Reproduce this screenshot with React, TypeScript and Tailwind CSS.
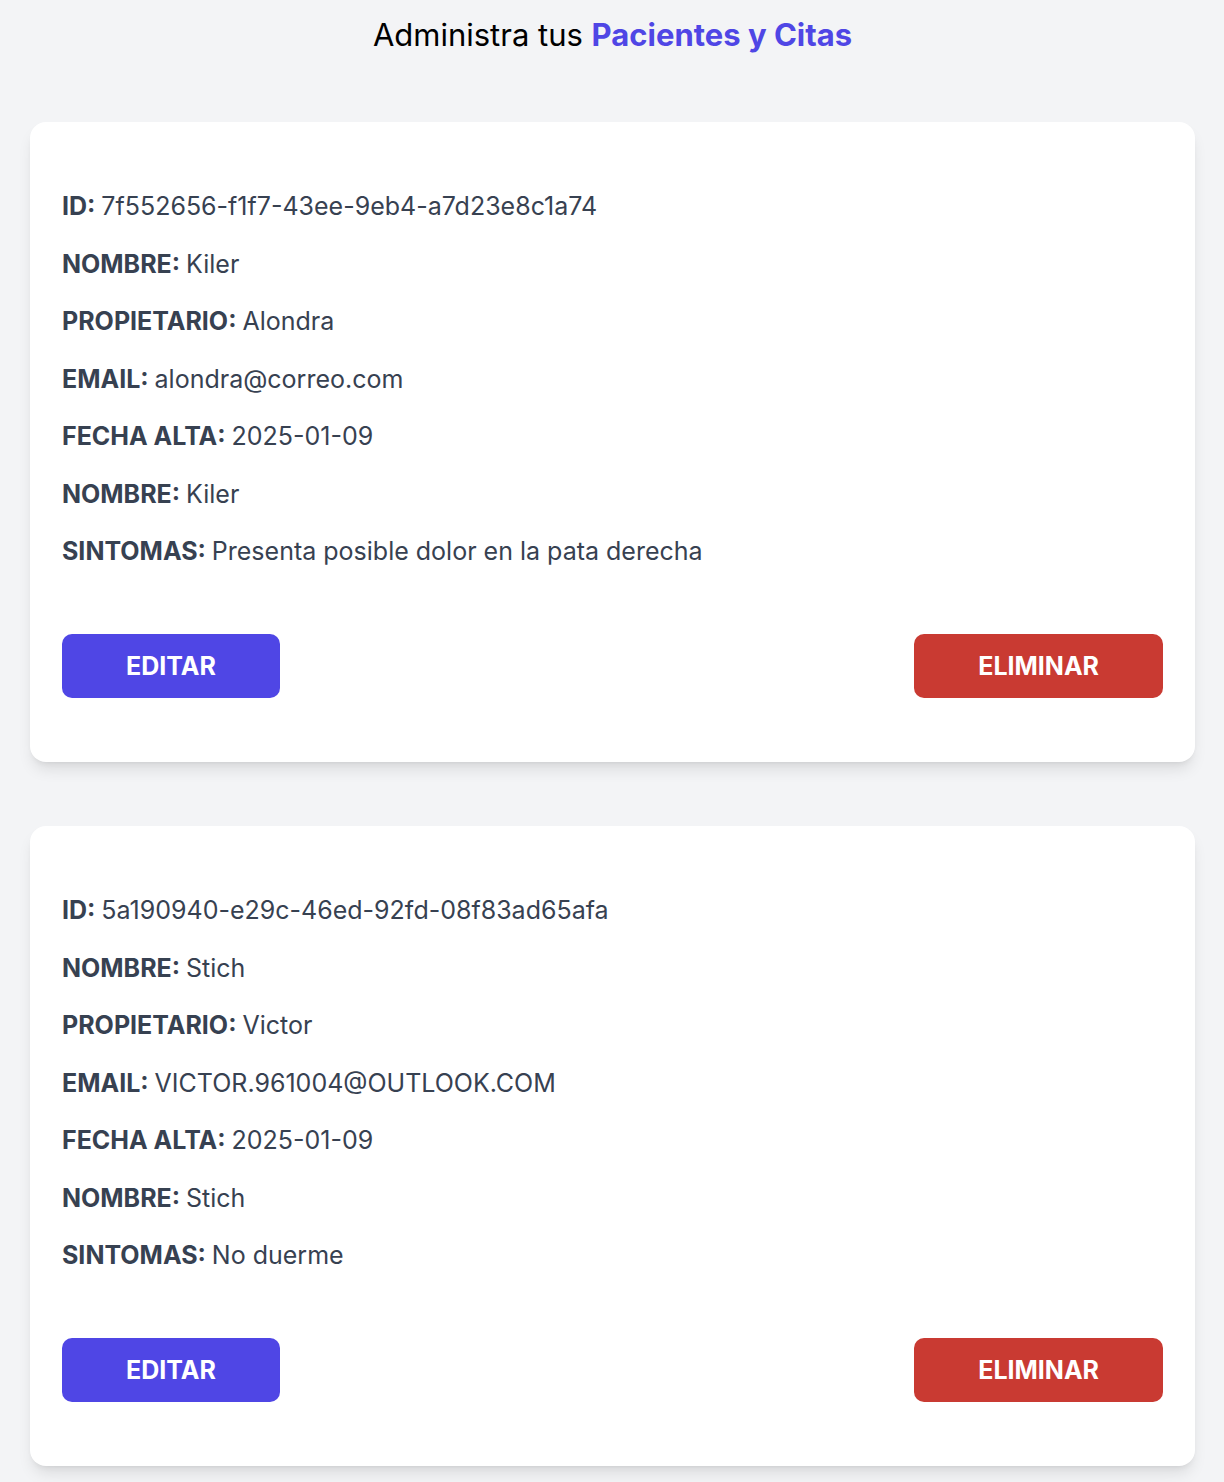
import React from "react";

type Paciente = {
  id: string;
  nombre: string;
  propietario: string;
  email: string;
  fecha: string;
  sintomas: string;
};

const pacientes: Paciente[] = [
  {
    id: "7f552656-f1f7-43ee-9eb4-a7d23e8c1a74",
    nombre: "Kiler",
    propietario: "Alondra",
    email: "alondra@correo.com",
    fecha: "2025-01-09",
    sintomas: "Presenta posible dolor en la pata derecha",
  },
  {
    id: "5a190940-e29c-46ed-92fd-08f83ad65afa",
    nombre: "Stich",
    propietario: "Victor",
    email: "VICTOR.961004@OUTLOOK.COM",
    fecha: "2025-01-09",
    sintomas: "No duerme",
  },
];

function Campo({ label, value }: { label: string; value: string }) {
  return (
    <p className="text-[25px] leading-8 text-[#374151]">
      <span className="font-bold">{label}: </span>
      {value}
    </p>
  );
}

function PacienteCard({ p }: { p: Paciente }) {
  return (
    <div className="bg-white rounded-2xl shadow-lg px-8 pt-[68px] pb-16">
      <div className="flex flex-col gap-[25.5px]">
        <Campo label="ID" value={p.id} />
        <Campo label="NOMBRE" value={p.nombre} />
        <Campo label="PROPIETARIO" value={p.propietario} />
        <Campo label="EMAIL" value={p.email} />
        <Campo label="FECHA ALTA" value={p.fecha} />
        <Campo label="NOMBRE" value={p.nombre} />
        <Campo label="SINTOMAS" value={p.sintomas} />
      </div>

      {/* Acciones */}
      <div className="flex justify-between mt-[67px]">
        <button className="px-16 py-4 bg-[#4f46e5] text-white text-[25px] leading-8 font-bold rounded-[10px]">
          EDITAR
        </button>
        <button className="px-16 py-4 bg-[#c93a32] text-white text-[25px] leading-8 font-bold rounded-[10px]">
          ELIMINAR
        </button>
      </div>
    </div>
  );
}

export default function App() {
  return (
    <div
      className="min-h-screen bg-[#f3f4f6] pl-[30px] pr-[29px]"
      style={{ fontFamily: "Inter, 'Noto Sans', sans-serif" }}
    >
      <h2 className="text-center text-[31px] leading-10 pt-[15px] text-black">
        Administra tus <span className="font-bold text-[#4f46e5]">Pacientes y Citas</span>
      </h2>

      <div className="flex flex-col gap-16 mt-[67px]">
        {pacientes.map((p) => (
          <PacienteCard key={p.id} p={p} />
        ))}
      </div>
    </div>
  );
}
